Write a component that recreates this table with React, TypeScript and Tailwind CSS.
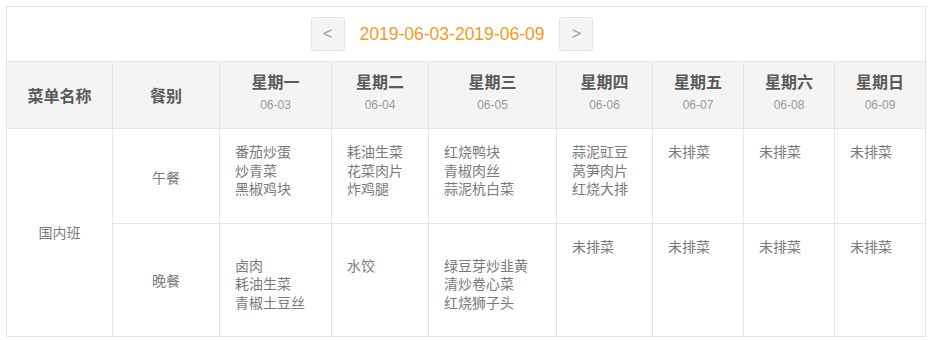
import React from "react";

const days = [
  { name: "星期一", date: "06-03" },
  { name: "星期二", date: "06-04" },
  { name: "星期三", date: "06-05" },
  { name: "星期四", date: "06-06" },
  { name: "星期五", date: "06-07" },
  { name: "星期六", date: "06-08" },
  { name: "星期日", date: "06-09" },
];

const lunch: string[][] = [
  ["番茄炒蛋", "炒青菜", "黑椒鸡块"],
  ["耗油生菜", "花菜肉片", "炸鸡腿"],
  ["红烧鸭块", "青椒肉丝", "蒜泥杭白菜"],
  ["蒜泥豇豆", "莴笋肉片", "红烧大排"],
  ["未排菜"],
  ["未排菜"],
  ["未排菜"],
];

const dinner: string[][] = [
  ["", "卤肉", "耗油生菜", "青椒土豆丝"],
  ["", "水饺"],
  ["", "绿豆芽炒韭黄", "清炒卷心菜", "红烧狮子头"],
  ["未排菜"],
  ["未排菜"],
  ["未排菜"],
  ["未排菜"],
];

const font = {
  fontFamily: '"Noto Sans CJK SC", "Liberation Sans", sans-serif',
};

function MenuCell({ items, pt }: { items: string[]; pt: string }) {
  return (
    <div className={`bg-white pl-[15px] ${pt} text-[14px] leading-[18.5px] text-[#7a7a7a]`}>
      {items.map((t, i) => (
        <div key={i} className="h-[18.5px] whitespace-nowrap">
          {t}
        </div>
      ))}
    </div>
  );
}

export default function App() {
  return (
    <div className="bg-white w-[934px] h-[340px] pt-[6px] pl-[6px]" style={font}>
      <div className="w-[920px] border border-[#e6e6e6]">
        <div className="h-[54px] flex items-center justify-center pr-[28px]">
          <button className="w-[34px] h-[34px] rounded-[3px] border border-[#e3e3e3] bg-[#f5f5f5] text-[#999] text-[16px] flex items-center justify-center" style={{ fontFamily: '"Liberation Sans", sans-serif' }}>
            &lt;
          </button>
          <span
            className="mx-[15px] text-[17.5px] text-[#f39a1e]"
            style={{ fontFamily: '"Liberation Sans", sans-serif' }}
          >
            2019-06-03-2019-06-09
          </span>
          <button className="w-[34px] h-[34px] rounded-[3px] border border-[#e3e3e3] bg-[#f5f5f5] text-[#999] text-[16px] flex items-center justify-center" style={{ fontFamily: '"Liberation Sans", sans-serif' }}>
            &gt;
          </button>
        </div>
        <div className="grid grid-cols-[105px_106px_111px_96px_127px_95px_90px_90px_90px] grid-rows-[66px_94px_112px] gap-px bg-[#e6e6e6] border-t border-[#e6e6e6]">
          <div className="bg-[#f4f4f4] flex items-center justify-center text-[16px] font-bold text-[#5a5a5a]">
            菜单名称
          </div>
          <div className="bg-[#f4f4f4] flex items-center justify-center text-[16px] font-bold text-[#5a5a5a]">
            餐别
          </div>
          {days.map((d) => (
            <div key={d.name} className="bg-[#f4f4f4] flex flex-col items-center pt-[9px]">
              <div className="text-[16px] leading-[20px] font-bold text-[#5a5a5a]">{d.name}</div>
              <div
                className="text-[12px] leading-[14px] mt-[7px] text-[#999]"
                style={{ fontFamily: '"Liberation Sans", sans-serif' }}
              >
                {d.date}
              </div>
            </div>
          ))}

          <div className="row-span-2 bg-white flex items-center justify-center text-[14px] text-[#7a7a7a]">
            国内班
          </div>
          <div className="bg-white flex items-center justify-center pt-[3px] text-[14px] text-[#7a7a7a]">
            午餐
          </div>
          {lunch.map((items, i) => (
            <MenuCell key={i} items={items} pt="pt-[13px]" />
          ))}
          <div className="bg-white flex items-center justify-center text-[14px] text-[#7a7a7a]">
            晚餐
          </div>
          {dinner.map((items, i) => (
            <MenuCell key={i} items={items} pt="pt-[13px]" />
          ))}
        </div>
      </div>
    </div>
  );
}
